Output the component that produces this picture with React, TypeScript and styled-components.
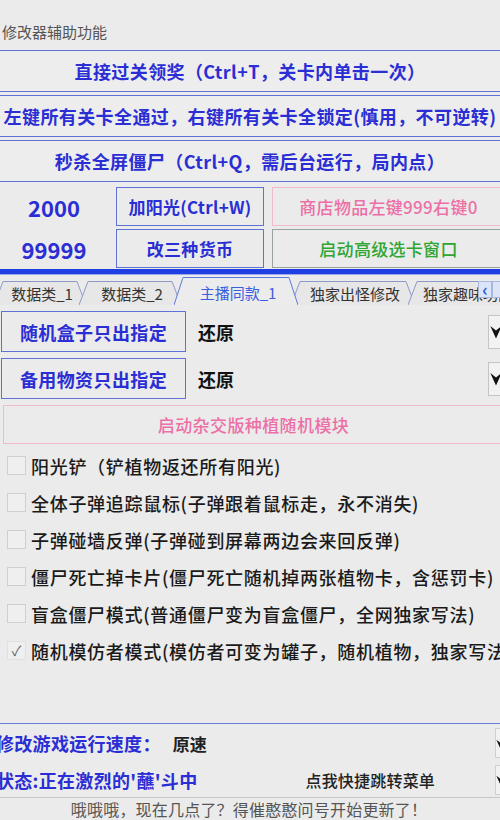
import styled, { createGlobalStyle } from "styled-components";

const GlobalStyle = createGlobalStyle`
  html, body {
    margin: 0;
    padding: 0;
    background: #ebebeb;
  }
  body {
    font-family: "Noto Sans CJK SC", "Noto Sans", sans-serif;
  }
`;

const BLUE = "#2a2ed4";
const BORDER_BLUE = "#5f70d6";

const tabs = [
    {label: "数据类_1", width: 92},
    {label: "数据类_2", width: 102},
    {label: "主播同款_1", width: 124, active: true},
    {label: "独家出怪修改", width: 124},
    {label: "独家趣味功能", width: 116},
];

const options = [
    {label: "阳光铲（铲植物返还所有阳光)", checked: false},
    {label: "全体子弹追踪鼠标(子弹跟着鼠标走，永不消失)", checked: false},
    {label: "子弹碰墙反弹(子弹碰到屏幕两边会来回反弹)", checked: false},
    {label: "僵尸死亡掉卡片(僵尸死亡随机掉两张植物卡，含惩罚卡)", checked: false},
    {label: "盲盒僵尸模式(普通僵尸变为盲盒僵尸，全网独家写法)", checked: false},
    {label: "随机模仿者模式(模仿者可变为罐子，随机植物，独家写法)", checked: true},
];

const Arrow = ({w = 12, h = 14}: { w?: number; h?: number }) => (
    <svg width={w} height={h} viewBox="0 0 12 14">
        <path d="M0.3 1 L6 13.5 L11.7 1 L6 5.5 Z" fill="#111"/>
    </svg>
);

const App = () => {
    return (
        <>
            <GlobalStyle/>
            <Page>
                <Header>修改器辅助功能</Header>

                <WideButton>直接过关领奖（Ctrl+T，关卡内单击一次）</WideButton>
                <WideButton>左键所有关卡全通过，右键所有关卡全锁定(慎用，不可逆转)</WideButton>
                <WideButton>秒杀全屏僵尸（Ctrl+Q，需后台运行，局内点）</WideButton>

                <QuickGrid>
                    <Number>2000</Number>
                    <BoxButton>加阳光(Ctrl+W)</BoxButton>
                    <ColorButton $tone="pink">商店物品左键999右键0</ColorButton>
                    <Number>99999</Number>
                    <BoxButton>改三种货币</BoxButton>
                    <ColorButton $tone="green">启动高级选卡窗口</ColorButton>
                </QuickGrid>

                <Bar/>

                <TabStrip>
                    {tabs.map((tab) => (
                        <Tab key={tab.label} $width={tab.width} $active={!!tab.active}>
                            <TabShape viewBox={`0 0 ${tab.width} ${tab.active ? 28 : 24}`}
                                      preserveAspectRatio="none">
                                <path
                                    d={`M0 ${tab.active ? 28 : 24} L9 0.5 L${tab.width - 9} 0.5 L${tab.width} ${tab.active ? 28 : 24}`}
                                    fill={tab.active ? "#ececec" : "#e7e7e7"}
                                    stroke={tab.active ? "#5d78dc" : "#8d9ac8"}
                                    strokeWidth="1"/>
                            </TabShape>
                            <TabLabel $active={!!tab.active}>{tab.label}</TabLabel>
                        </Tab>
                    ))}
                    <Scroller>
                        <ScrollBtn>‹</ScrollBtn>
                        <ScrollBtn/>
                    </Scroller>
                </TabStrip>

                <Content>
                    <PickRow>
                        <PickButton>随机盒子只出指定</PickButton>
                        <PickValue>还原</PickValue>
                        <DropBox><Arrow/></DropBox>
                    </PickRow>
                    <PickRow>
                        <PickButton>备用物资只出指定</PickButton>
                        <PickValue>还原</PickValue>
                        <DropBox><Arrow/></DropBox>
                    </PickRow>
                    <PinkWide>启动杂交版种植随机模块</PinkWide>

                    <Options>
                        {options.map((opt) => (
                            <OptionRow key={opt.label}>
                                <CheckBox $checked={opt.checked}>{opt.checked ? "✓" : ""}</CheckBox>
                                <OptionText>{opt.label}</OptionText>
                            </OptionRow>
                        ))}
                    </Options>
                </Content>

                <Bottom>
                    <StatusRow $height={38}>
                        <StatusLabel>修改游戏运行速度：</StatusLabel>
                        <SpeedValue>原速</SpeedValue>
                        <SmallDrop><Arrow w={8} h={9}/></SmallDrop>
                    </StatusRow>
                    <StatusRow $height={35}>
                        <StatusLabel>状态:正在激烈的'蘸'斗中</StatusLabel>
                        <JumpMenu>点我快捷跳转菜单</JumpMenu>
                        <SmallDrop><Arrow w={8} h={9}/></SmallDrop>
                    </StatusRow>
                    <Footer>哦哦哦，现在几点了？得催憨憨问号开始更新了！</Footer>
                </Bottom>
            </Page>
        </>
    );
};

export default App;

const Page = styled.div`
    width: 500px;
    height: 820px;
    overflow: hidden;
    display: flex;
    flex-direction: column;
    background: #ebebeb;
`;

const Header = styled.div`
    height: 50px;
    box-sizing: border-box;
    padding: 22px 0 0 2px;
    line-height: 20px;
    font-size: 15px;
    color: #555;
`;

const WideButton = styled.div`
    height: 42px;
    box-sizing: border-box;
    margin: 0 -4px 3px;
    border: 1.5px solid ${BORDER_BLUE};
    background: #ededed;
    display: flex;
    align-items: center;
    justify-content: center;
    white-space: nowrap;
    font-size: 18px;
    font-weight: 700;
    color: ${BLUE};
    letter-spacing: 0.4px;
`;

const QuickGrid = styled.div`
    display: grid;
    grid-template-columns: 108px 148px 240px;
    grid-auto-rows: 39px;
    column-gap: 8px;
    row-gap: 3px;
    padding-top: 2px;
`;

const Number = styled.div`
    display: flex;
    align-items: center;
    justify-content: center;
    font-size: 22px;
    font-weight: 700;
    color: ${BLUE};
`;

const BoxButton = styled.div`
    box-sizing: border-box;
    border: 1.5px solid ${BORDER_BLUE};
    display: flex;
    align-items: center;
    justify-content: center;
    white-space: nowrap;
    font-size: 17px;
    font-weight: 700;
    color: ${BLUE};
    letter-spacing: 0.3px;
`;

const ColorButton = styled.div<{ $tone: "pink" | "green" }>`
    box-sizing: border-box;
    border: 1px solid ${(p) => (p.$tone === "pink" ? "#f0bccd" : "#9aa39a")};
    border-right: none;
    display: flex;
    align-items: center;
    justify-content: center;
    white-space: nowrap;
    font-size: 17px;
    font-weight: 500;
    letter-spacing: 0.3px;
    color: ${(p) => (p.$tone === "pink" ? "#ec70a6" : "#2fa532")};
    padding-right: 8px;
`;

const Bar = styled.div`
    height: 5px;
    margin-top: 1px;
    background: #1f3fe4;
    border-bottom: 1px solid #9aa8ea;
`;

const TabStrip = styled.div`
    position: relative;
    height: 29px;
    display: flex;
    align-items: flex-end;
    margin-left: -6px;
    border-bottom: 1px solid #7a8ad2;
`;

const Tab = styled.div<{ $width: number; $active: boolean }>`
    position: relative;
    flex: none;
    width: ${(p) => p.$width}px;
    height: ${(p) => (p.$active ? 28 : 24)}px;
    margin-right: -7px;
    margin-bottom: -1px;
    z-index: ${(p) => (p.$active ? 2 : 1)};
    display: flex;
    align-items: center;
    justify-content: center;
`;

const TabShape = styled.svg`
    position: absolute;
    inset: 0;
    width: 100%;
    height: 100%;
`;

const TabLabel = styled.span<{ $active: boolean }>`
    position: relative;
    font-size: 15px;
    white-space: nowrap;
    color: ${(p) => (p.$active ? "#3a5ee0" : "#333")};
    margin-top: ${(p) => (p.$active ? 2 : 0)}px;
    padding-left: 4px;
`;

const Scroller = styled.div`
    position: absolute;
    right: -6px;
    top: 6px;
    display: flex;
    z-index: 3;
`;

const ScrollBtn = styled.div`
    width: 14px;
    height: 17px;
    box-sizing: border-box;
    border: 1px solid #a8b8dc;
    background: #dbe5f7;
    color: #2e58d8;
    font-size: 17px;
    font-weight: 700;
    line-height: 13px;
    text-align: center;
`;

const Content = styled.div`
    display: flex;
    flex-direction: column;
    padding-top: 6px;
`;

const PickRow = styled.div`
    display: flex;
    align-items: center;
    height: 41px;
    margin-bottom: 6px;
`;

const PickButton = styled.div`
    width: 185px;
    height: 41px;
    box-sizing: border-box;
    margin-left: 1px;
    border: 1.5px solid ${BORDER_BLUE};
    display: flex;
    align-items: center;
    justify-content: center;
    font-size: 18px;
    font-weight: 700;
    letter-spacing: 0.4px;
    color: ${BLUE};
`;

const PickValue = styled.div`
    flex: 1;
    margin-left: 12px;
    font-size: 18px;
    font-weight: 700;
    color: #111;
`;

const DropBox = styled.div`
    width: 20px;
    height: 34px;
    box-sizing: border-box;
    margin-right: -8px;
    border: 1px solid #c4c4c4;
    background: #f2f2f2;
    display: flex;
    align-items: center;
    padding-left: 1px;
`;

const PinkWide = styled.div`
    height: 39px;
    box-sizing: border-box;
    margin: 0 -4px 0 3px;
    border: 1px solid #f0bccd;
    display: flex;
    align-items: center;
    justify-content: center;
    font-size: 17px;
    font-weight: 500;
    letter-spacing: 0.4px;
    color: #ec70a6;
`;

const Options = styled.div`
    display: flex;
    flex-direction: column;
    margin-top: 3px;
`;

const OptionRow = styled.div`
    height: 37px;
    display: flex;
    align-items: center;
    padding-left: 7px;
    gap: 5px;
    white-space: nowrap;
`;

const CheckBox = styled.div<{ $checked: boolean }>`
    flex: none;
    width: 19px;
    height: 19px;
    box-sizing: border-box;
    border: 1px solid ${(p) => (p.$checked ? "#e0e0e0" : "#cfcfcf")};
    background: #efefef;
    color: #666;
    font-size: 14px;
    line-height: 17px;
    text-align: center;
`;

const OptionText = styled.span`
    font-size: 18px;
    font-weight: 500;
    color: #1a1a1a;
    letter-spacing: 0.7px;
`;

const Bottom = styled.div`
    margin-top: auto;
    border-top: 1px solid #6a7ad8;
    display: flex;
    flex-direction: column;
`;

const StatusRow = styled.div<{ $height: number }>`
    height: ${(p) => p.$height}px;
    display: flex;
    align-items: center;
    white-space: nowrap;
`;

const StatusLabel = styled.div`
    margin-left: -4px;
    font-size: 18px;
    font-weight: 700;
    letter-spacing: 0.3px;
    color: ${BLUE};
`;

const SpeedValue = styled.div`
    flex: 1;
    margin-left: 12px;
    font-size: 17px;
    font-weight: 700;
    color: #222;
`;

const JumpMenu = styled.div`
    flex: 1;
    padding-left: 108px;
    font-size: 16px;
    font-weight: 500;
    letter-spacing: 0.2px;
    color: #222;
`;

const SmallDrop = styled.div`
    width: 12px;
    height: 30px;
    box-sizing: border-box;
    margin-right: -7px;
    border: 1px solid #cfcfcf;
    background: #f2f2f2;
    display: flex;
    align-items: center;
`;

const Footer = styled.div`
    height: 22px;
    border-top: 1px solid #c8c8c8;
    display: flex;
    align-items: center;
    justify-content: center;
    padding-right: 2px;
    font-size: 16px;
    letter-spacing: 0.2px;
    color: #555;
    white-space: nowrap;
`;
